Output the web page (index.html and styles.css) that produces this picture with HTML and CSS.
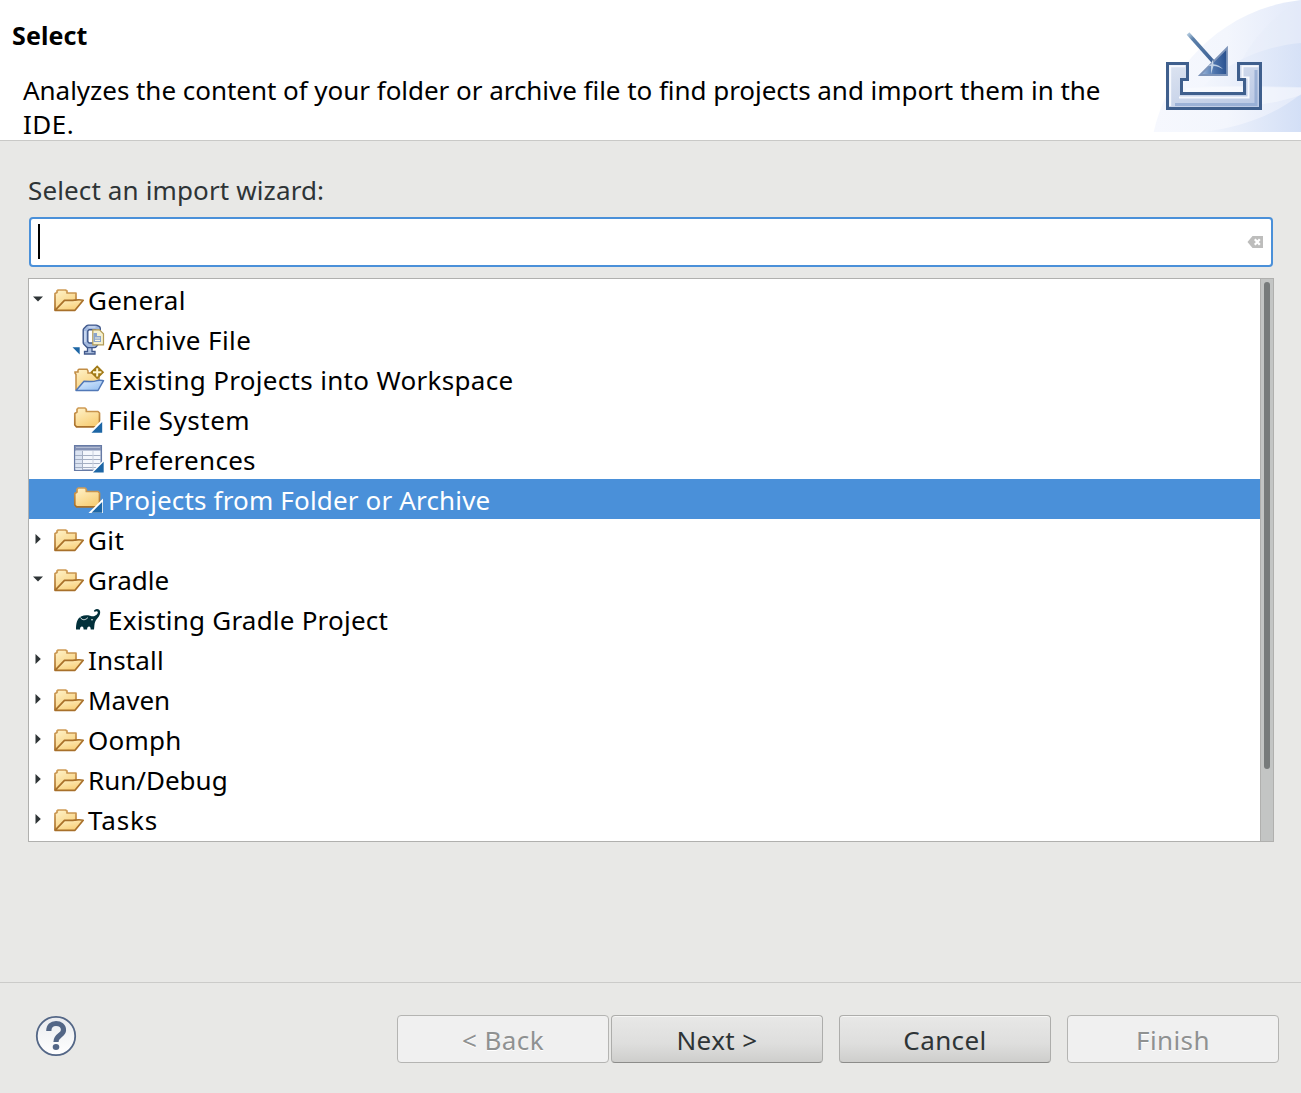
FILE: index.html
```html
<!DOCTYPE html>
<html lang="en">
<head>
<meta charset="utf-8">
<title>Import</title>
<link rel="stylesheet" href="styles.css">
</head>
<body>
<svg class="defs" width="0" height="0">
  <defs>
    <linearGradient id="gold" x1="0" y1="0" x2="0.6" y2="1"><stop offset="0" stop-color="#fff3cb"/><stop offset="1" stop-color="#f8cf78"/></linearGradient>
    <linearGradient id="goldEdge" x1="0" y1="0" x2="0" y2="1"><stop offset="0" stop-color="#cf9c56"/><stop offset="1" stop-color="#a8702a"/></linearGradient>
    <linearGradient id="blueFill" x1="0" y1="0" x2="1" y2="1"><stop offset="0" stop-color="#e2f0ff"/><stop offset="1" stop-color="#8fbcf0"/></linearGradient>
    <symbol id="open" viewBox="0 0 32 32">
      <path d="M2 26V9.500l2-1V7l1.200-1h7.300L14 7v2h9v7" fill="url(#gold)" stroke="url(#goldEdge)" stroke-width="1.700" stroke-linejoin="round"/>
      <path d="M2 26.300 11.500 16.300c4 0 7 .4 10-.1s5-1 8.700.1L22 26.300z" fill="url(#gold)" stroke="#a8702a" stroke-width="1.700" stroke-linejoin="round"/>
    </symbol>
    <symbol id="folder" viewBox="0 0 32 32">
      <path d="M1.800 21V9.500L4 8V5.300L5.200 4H12l1.300 1.300V7.500H25L26.500 9v12L25 22.800H3.500z" fill="url(#gold)" stroke="url(#goldEdge)" stroke-width="1.700" stroke-linejoin="round"/>
      <path d="M30 14.500V29H15.500z" fill="#fff"/><path d="M29.200 18v10.700H18.500z" fill="#1d66a5"/>
    </symbol>
    <symbol id="prefs" viewBox="0 0 32 32">
      <path d="M1.700 1.700h26.600v24.600H1.700z" fill="#f4f7fc" stroke="#667aa5" stroke-width="1.500"/>
      <path d="M2 2h26v4.500H2z" fill="#8492b5"/><path d="M3 3.500h24" stroke="#b1bbd2" stroke-width="1"/>
      <path d="M2.500 7h7v19h-7z" fill="#dce4f2"/>
      <path d="M9.500 7v19M2 11.500h26M2 15.500h26M2 19.500h26M2 23.500h26" stroke="#a4afc3" stroke-width="1"/>
      <path d="M20 7v19" stroke="#c9d0dd" stroke-width="1"/>
      <path d="M32 14.500V29H17.500z" fill="#fff"/><path d="M30.700 17.700v10.800H20z" fill="#1d66a5"/>
    </symbol>
    <symbol id="archive" viewBox="0 0 32 32" overflow="visible">
      <path d="M-.5 23.200h7.200v7.300z" fill="#1d66a5"/>
      <path d="M14.500 22h4.500v5.500h3v2.500H11.500v-2.500h3z" fill="#b3c5e3" stroke="#40588b" stroke-width="1.300"/>
      <path d="M25 8V4.500L23 3.400h-7.800l-2.700 2.700v12.500l2.700 2.700h6.300l1.500-2v-1.300" fill="none" stroke="#40588b" stroke-width="6" stroke-linejoin="round"/>
      <path d="M25 7.500V4.500L23 3.400h-7.800l-2.700 2.700v12.500l2.700 2.700h6.300l1.500-2v-.800" fill="none" stroke="#a3b9de" stroke-width="3.200" stroke-linejoin="round"/>
      <path d="M12 7v11M15.500 3h7" fill="none" stroke="#dfe9f8" stroke-width="1.200"/>
      <path d="M19.800 5.800h6.700l4 4v11h-10.700z" fill="#f5f0ce" stroke="#b39b54" stroke-width="1.200"/>
      <path d="M20.500 9h3.500v3h4v6h-7.500z" fill="#8aa4cc"/>
      <path d="M22 14h5M22 16.300h5" stroke="#f7f4dd" stroke-width="1.200"/>
    </symbol>
    <symbol id="project" viewBox="0 0 32 32">
      <path d="M3 26V10.500L2 9V8h3V6l1-.8h8L15 7v2h11v14" fill="url(#gold)" stroke="#c28d45" stroke-width="1.500"/>
      <path d="M3 26.500 11 17.300c7 0 9 .6 12-.4 3-1 4-.7 7.500-.2L25 26.500z" fill="url(#blueFill)" stroke="#5178b7" stroke-width="1.500" stroke-linejoin="round"/>
      <path d="m24.200 1.300 7 7-7 7-7-7z" fill="#a27a16"/><path d="M24.200 4.200v8.200M20 8.300h8.400" stroke="#fff6d0" stroke-width="2"/>
    </symbol>
    <symbol id="gradle" viewBox="0 0 32 32">
      <path d="M3 25.500c0-6 1-11 5-13 3-1.500 6-1.500 9-.8 2 .4 3 1 4.500.3 2.500-1.200 4.300-3.500 2.800-4.600-1-.7-2 .6-3.100.2C20.200 7 21.500 5.300 23.800 5c3-.2 4.100 2.700 3 5.500-1 3-3.300 4.400-4.300 6.600-1.400 2.800-1 5.600-1.500 8.400h-3.300c0-2-.5-3-1.700-3s-1.900 1-1.900 3h-3.500c0-2-.5-3-1.700-3s-1.900 1-1.900 3z" fill="#02303a"/>
      <path d="M7.500 13.500c1.500 2.800 4.500 3 7.300.2" fill="none" stroke="#fff" stroke-width=".9"/>
      <circle cx="19" cy="15.800" r=".8" fill="#fff"/>
    </symbol>
    <symbol id="down" viewBox="0 0 10 10"><path d="M0 2.500h10L5 7.500z" fill="#2e3436"/></symbol>
    <symbol id="right" viewBox="0 0 10 10"><path d="M2.500 0v10L7.800 5z" fill="#2e3436"/></symbol>
  </defs>
</svg>

<div class="dialog">
  <header class="banner">
    <div class="banner-text">
      <h1>Select</h1>
      <p><span class="desc">Analyzes the content of your folder or archive file to find projects and import them in the</span><br><span class="ide">IDE.</span></p>
    </div>
    <svg class="banner-art" viewBox="0 0 160 132" width="160" height="132">
      <defs>
        <linearGradient id="sky" x1="0" y1="0" x2="1" y2="0"><stop offset="0" stop-color="#f6f8fe"/><stop offset="0.500" stop-color="#f3f6fd"/><stop offset="1" stop-color="#e2e9f9"/></linearGradient>
        <linearGradient id="sky2" x1="0" y1="0" x2="1" y2="0"><stop offset="0" stop-color="#f3f6fd"/><stop offset="1" stop-color="#d3dff6"/></linearGradient>
        <linearGradient id="tray" x1="0" y1="0" x2="0.800" y2="1"><stop offset="0" stop-color="#dde4f1"/><stop offset="1" stop-color="#bccae5"/></linearGradient>
        <linearGradient id="head" x1="0" y1="0.500" x2="1" y2="0.400"><stop offset="0" stop-color="#9db9dc"/><stop offset="0.500" stop-color="#4d74ac"/><stop offset="1" stop-color="#29508e"/></linearGradient>
        <linearGradient id="shaft" gradientUnits="userSpaceOnUse" x1="47" y1="33" x2="72" y2="62"><stop offset="0" stop-color="#bad0e2"/><stop offset="0.200" stop-color="#5c80aa"/><stop offset="1" stop-color="#3d6296"/></linearGradient>
      </defs>
      <path d="M12.700 132C25 75 75 10 160 0v132z" fill="url(#sky)"/>
      <path d="M160 0C130 16 103 48 88 86h72z" fill="#e4ebfa" opacity=".3"/>
      <path d="M62 86C90 60 125 46 160 43v45z" fill="url(#sky2)" opacity=".8"/>
      <path d="M60 132c40-4 75-18 100-38v38z" fill="url(#sky2)"/>
      <path d="M45 88c40-2 80-2 115-1v8c-35 12-75 14-115 14z" fill="#fff" opacity=".35"/>
      <path d="M26.500 63.500h20v16h-6v14h63v-14h-6v-16h22v45h-93z" fill="url(#tray)"/>
      <path d="M29.200 106V66.200H44M38 97.500h69.500V77.500h-6V66.200h16" fill="none" stroke="#f6f8fd" stroke-width="2"/>
      <path d="M34 104.500h81V70" fill="none" stroke="#8ea7d0" stroke-width="3" opacity=".75"/>
      <path d="M26.500 63.500h20v16h-6v14h63v-14h-6v-16h22v45h-93z" fill="none" stroke="#3f5f8d" stroke-width="3"/>
      <path d="m47 33.500 25 28" stroke="url(#shaft)" stroke-width="3.600"/>
      <path d="M86 48v27H59z" fill="url(#head)" stroke="#7d94b9" stroke-width="1.800"/>
      <path d="M70 74v-8l-3-.8 3.500-1 1-5 1 5c4 .3 7 2 9.500 5-3-2-6-3-9.500-3.200z" fill="#dbe7f4" opacity=".8"/>
    </svg>
  </header>

  <main class="content">
    <label class="prompt">Select an import wizard:</label>
    <div class="search">
      <span class="caret"></span>
      <svg width="17" height="14" viewBox="0 0 17 14"><path d="M5.500 1H16v12H5.500L.5 7z" fill="#bdbdbc"/><path d="m7.800 4.200 5 5.600m0-5.600-5 5.600" stroke="#fff" stroke-width="2.200"/></svg>
    </div>
    <div class="tree">
      <ul class="rows">
        <li><svg class="tw"><use href="#down"/></svg><svg class="ic"><use href="#open"/></svg><span class="general">General</span></li>
        <li class="child"><svg class="ic"><use href="#archive"/></svg><span class="archive">Archive File</span></li>
        <li class="child"><svg class="ic"><use href="#project"/></svg><span class="existing">Existing Projects into Workspace</span></li>
        <li class="child"><svg class="ic"><use href="#folder"/></svg><span class="filesystem">File System</span></li>
        <li class="child"><svg class="ic"><use href="#prefs"/></svg><span class="preferences">Preferences</span></li>
        <li class="child selected"><svg class="ic"><use href="#folder"/></svg><span class="projects">Projects from Folder or Archive</span></li>
        <li><svg class="tw"><use href="#right"/></svg><svg class="ic"><use href="#open"/></svg><span class="git">Git</span></li>
        <li><svg class="tw"><use href="#down"/></svg><svg class="ic"><use href="#open"/></svg><span>Gradle</span></li>
        <li class="child"><svg class="ic"><use href="#gradle"/></svg><span class="gradleproject">Existing Gradle Project</span></li>
        <li><svg class="tw"><use href="#right"/></svg><svg class="ic"><use href="#open"/></svg><span class="install">Install</span></li>
        <li><svg class="tw"><use href="#right"/></svg><svg class="ic"><use href="#open"/></svg><span>Maven</span></li>
        <li><svg class="tw"><use href="#right"/></svg><svg class="ic"><use href="#open"/></svg><span class="oomph">Oomph</span></li>
        <li><svg class="tw"><use href="#right"/></svg><svg class="ic"><use href="#open"/></svg><span>Run/Debug</span></li>
        <li><svg class="tw"><use href="#right"/></svg><svg class="ic"><use href="#open"/></svg><span class="tasks">Tasks</span></li>
      </ul>
      <div class="scrollbar"><div class="thumb"></div></div>
    </div>
  </main>

  <footer class="actions">
    <svg class="help" width="42" height="42" viewBox="0 0 42 42">
      <defs><linearGradient id="hg" x1="0" y1="0" x2="0" y2="1"><stop offset="0" stop-color="#e9ebef"/><stop offset="1" stop-color="#fff"/></linearGradient></defs>
      <circle cx="21" cy="21" r="19.200" fill="url(#hg)" stroke="#536686" stroke-width="1.800"/>
      <path d="M13.800 16c0-5 3-7.500 7.200-7.500s7.500 2.300 7.500 6.500c0 5.500-7.500 5-7.500 12" fill="none" stroke="#536686" stroke-width="5.200"/>
      <ellipse cx="21" cy="32" rx="3.300" ry="2.900" fill="#536686"/>
    </svg>
    <div class="buttons">
      <button class="off" disabled>&lt; Back</button>
      <button>Next &gt;</button>
      <button class="cancel">Cancel</button>
      <button class="off finish" disabled>Finish</button>
    </div>
  </footer>
</div>
</body>
</html>
```
FILE: styles.css
```css
* { box-sizing: border-box; }
body { margin: 0; font-family: "Noto Sans", "Open Sans", sans-serif; font-size: 26px; color: #000; background: #e8e8e6; }
.defs { position: absolute; }
.dialog { width: 1301px; height: 1093px; display: flex; flex-direction: column; }
.banner { height: 141px; background: #fff; border-bottom: 1px solid #c9c9c7; display: flex; justify-content: space-between; }
.banner-text { padding-top: 17px; white-space: nowrap; }
h1 { margin: 0 0 0 12px; font-size: 25px; line-height: 36px; font-weight: 700; letter-spacing: 0.1px; }
p { margin: 20px 0 0 23px; line-height: 34px; }
.desc { letter-spacing: -0.035px; }
.ide { letter-spacing: 0.5px; }
.banner-art { flex: none; }
.content { flex: 1; padding: 31px 27px 0 28px; display: flex; flex-direction: column; }
.prompt { line-height: 36px; color: #2e3436; letter-spacing: 0.13px; }
.search { margin: 9px 0 0 1px; width: 1244px; height: 50px; background: #fff; border: 2px solid #4a90d9; border-radius: 4px; display: flex; align-items: center; justify-content: space-between; padding: 0 7px 0 7px; }
.caret { width: 2px; height: 35px; margin-bottom: 2px; background: #000; }
.tree { margin-top: 11px; height: 564px; border: 1px solid #b0b0ae; background: #fff; display: flex; }
.rows { list-style: none; margin: 0; padding: 0; flex: 1; }
.rows li { height: 40px; display: flex; align-items: center; padding-left: 4px; }
.rows li span { padding-top: 2px; white-space: nowrap; }
.rows .child { padding-left: 44px; }
.rows .selected { background: #4a90d9; color: #fff; }
.general { letter-spacing: 0.25px; }
.archive { letter-spacing: 0.42px; }
.existing { letter-spacing: 0.32px; }
.filesystem { letter-spacing: 0.5px; }
.preferences { letter-spacing: 0.28px; }
.projects { letter-spacing: 0.16px; }
.git { letter-spacing: 0.4px; }
.gradleproject { letter-spacing: 0.22px; }
.install { letter-spacing: 0.15px; }
.oomph { letter-spacing: 0.2px; }
.tasks { letter-spacing: 0.85px; }
.tw { width: 10px; height: 10px; margin-right: 10px; }
.ic { width: 32px; height: 32px; margin-right: 3px; margin-top: 2px; overflow: visible; }
.scrollbar { width: 13px; background: #c3c5c4; border-left: 1px solid #b0b0ae; padding: 3px 3px; }
.thumb { width: 6px; height: 487px; border-radius: 3px; background: #777b7b; }
.actions { height: 111px; border-top: 1px solid #cbcbc9; display: flex; justify-content: space-between; padding: 32px 22px 0 35px; }
.buttons { display: flex; }
button { width: 212px; height: 48px; margin: 0 0 0 2px; padding: 2px 0 0; font: inherit; letter-spacing: 0.4px; color: #2e3436; border: 1px solid #adadab; border-bottom-color: #8c8c8a; border-radius: 4px; background: linear-gradient(#e8e8e7, #dededd 60%, #cececc); box-shadow: inset 0 1px #f6f6f5; }
button.off { color: #8f9191; background: #f0f0f0; border-color: #b4b4b2; box-shadow: none; text-shadow: 0 1px #fff; }
button.cancel, button.finish { margin-left: 16px; }
```
